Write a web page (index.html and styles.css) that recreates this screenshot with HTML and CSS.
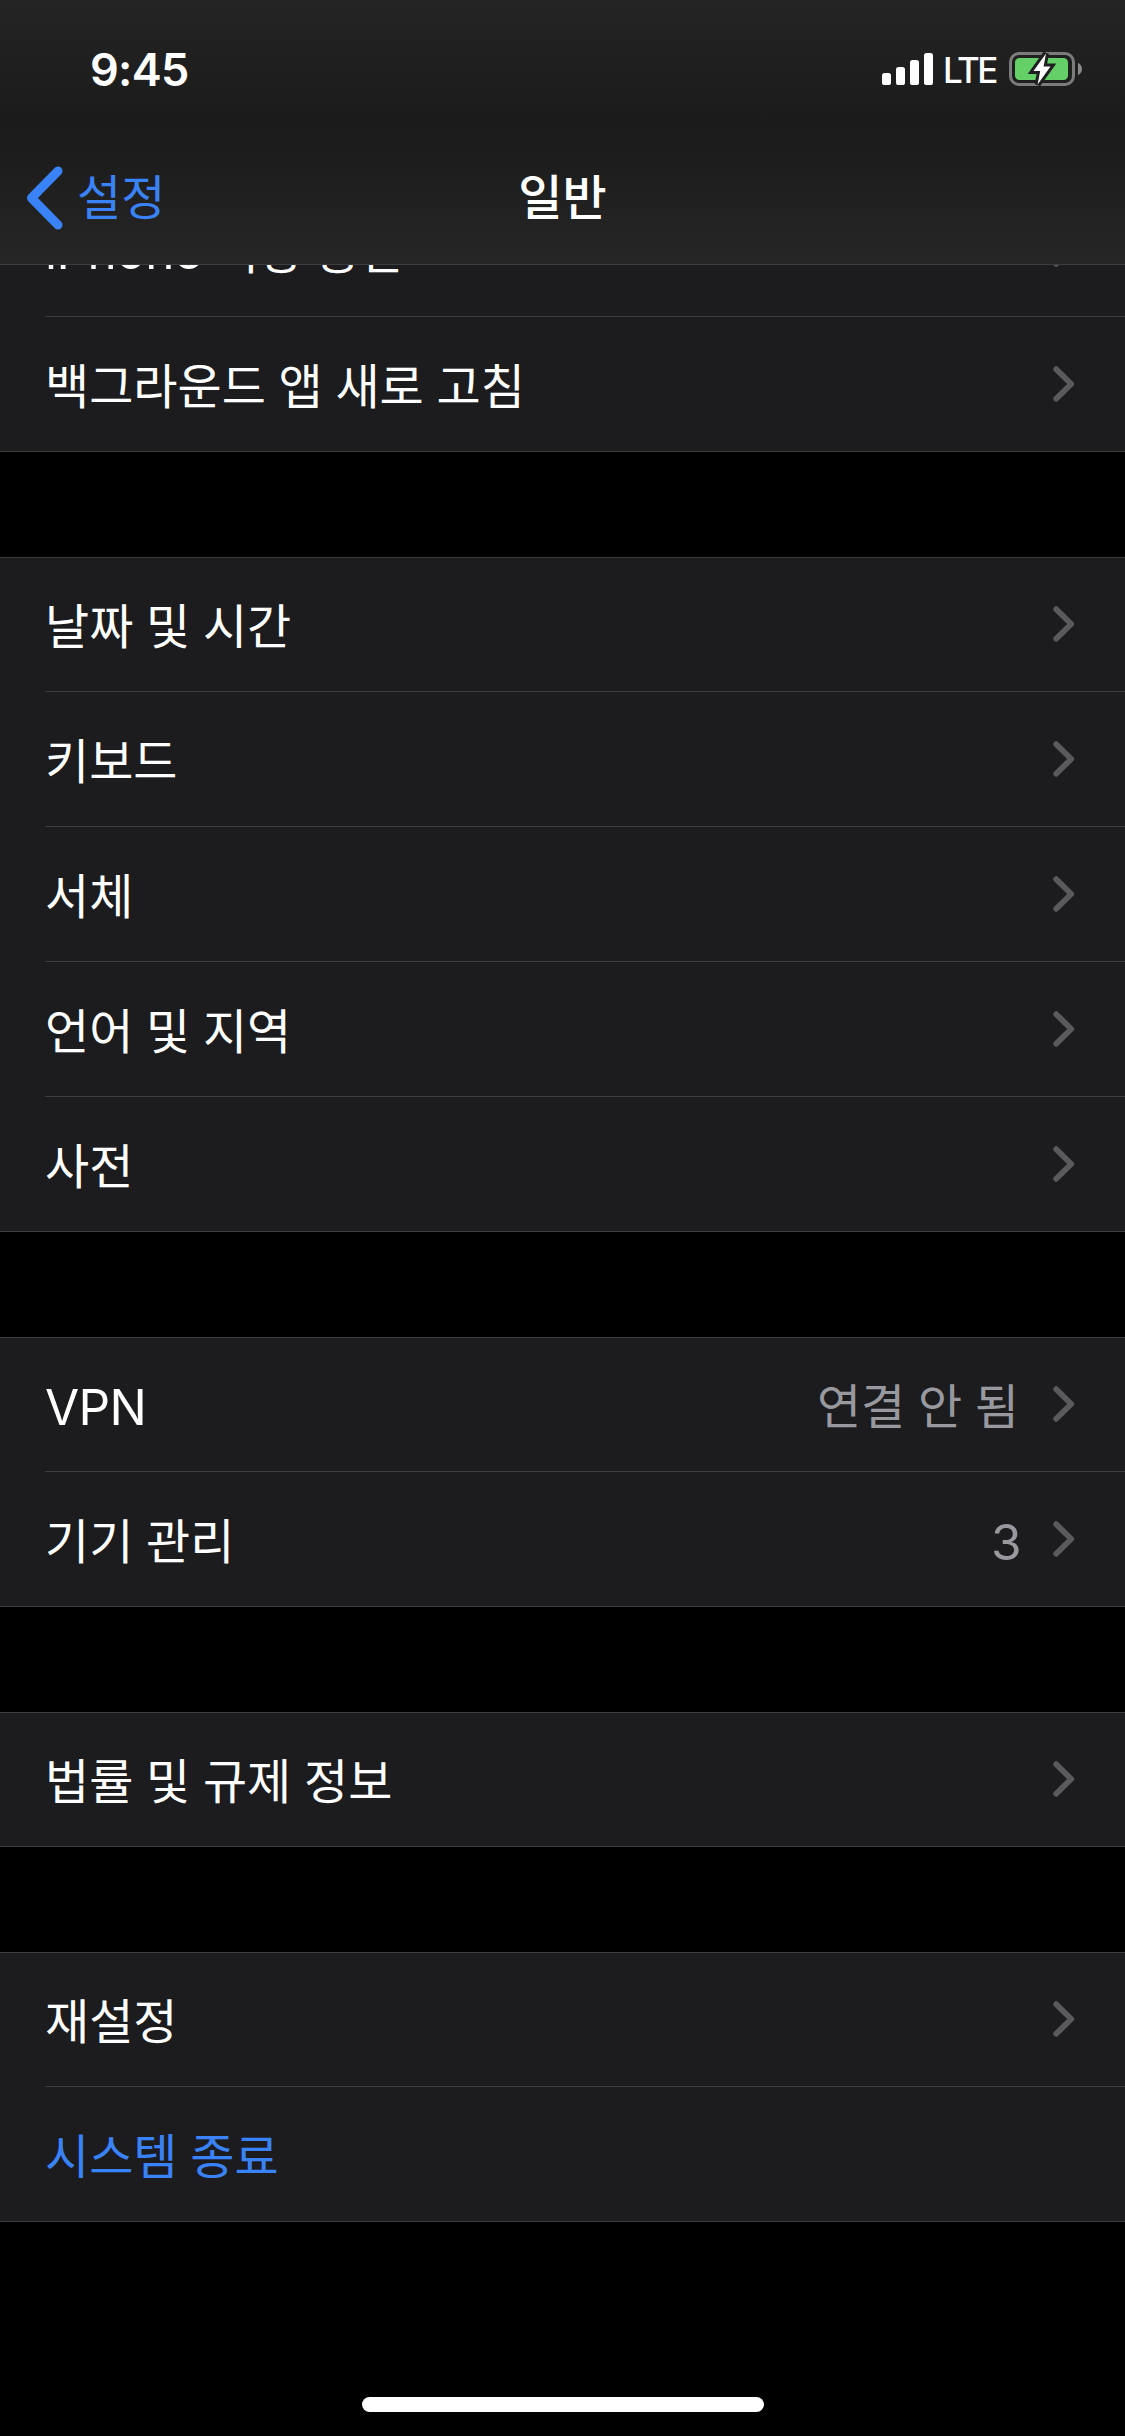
FILE: index.html
```html
<!DOCTYPE html>
<html lang="ko">
<head>
  <meta charset="UTF-8" />
  <meta name="viewport" content="width=device-width, initial-scale=1.0"/>
  <title>일반</title>
  <link rel="stylesheet" href="styles.css">
</head>
<body>

<svg class="sprite" aria-hidden="true">
  <symbol id="chevron" viewBox="0 0 22 36">
    <path d="M3.2 3.2 L18.2 18 L3.2 32.8" fill="none" stroke="currentColor" stroke-width="5.8" stroke-linecap="round" stroke-linejoin="round"/>
  </symbol>
</svg>

<header class="top">
  <div class="status-bar">
    <div class="time">9:45</div>
    <div class="status-icons">
      <svg class="signal" width="51" height="32" viewBox="0 0 51 32" fill="#fff">
        <rect x="0" y="20" width="9" height="12" rx="2.6"/>
        <rect x="14" y="14" width="9" height="18" rx="2.6"/>
        <rect x="28" y="7" width="9" height="25" rx="2.6"/>
        <rect x="42" y="0" width="9" height="32" rx="2.6"/>
      </svg>
      <span class="network">LTE</span>
      <svg class="battery" width="74" height="34" viewBox="0 0 74 34">
        <rect x="1.5" y="1.5" width="63" height="31" rx="8.5" fill="none" stroke="#7c7c7c" stroke-width="3"/>
        <path d="M69 10.7 Q73 13 73 17 Q73 21 69 23 Z" fill="#8a8a8a"/>
        <rect x="6" y="6" width="53" height="22" rx="4.5" fill="#65d068"/>
        <path d="M37 1.5 L24.5 19 H31.2 L28.6 32.5 L41.5 14.5 H34.6 Z" fill="#fff" stroke="#1f1f1f" stroke-width="6" paint-order="stroke"/>
      </svg>
    </div>
  </div>
  <nav class="nav-bar">
    <a class="back">
      <svg width="37" height="64" viewBox="0 0 37 64">
        <path d="M32 5 L5.5 32 L32 59" fill="none" stroke="currentColor" stroke-width="9" stroke-linecap="round" stroke-linejoin="round"/>
      </svg>
      <span class="back-text">설정</span>
    </a>
    <h1 class="title">일반</h1>
  </nav>
</header>

<main class="list">
  <section class="group">
    <div class="row"><span class="label"><span class="latin">iPhone</span> 저장 공간</span><svg class="chevron"><use href="#chevron"/></svg></div>
    <div class="row"><span class="label">백그라운드 앱 새로 고침</span><svg class="chevron"><use href="#chevron"/></svg></div>
  </section>

  <section class="group">
    <div class="row"><span class="label">날짜 및 시간</span><svg class="chevron"><use href="#chevron"/></svg></div>
    <div class="row"><span class="label">키보드</span><svg class="chevron"><use href="#chevron"/></svg></div>
    <div class="row"><span class="label">서체</span><svg class="chevron"><use href="#chevron"/></svg></div>
    <div class="row"><span class="label">언어 및 지역</span><svg class="chevron"><use href="#chevron"/></svg></div>
    <div class="row"><span class="label">사전</span><svg class="chevron"><use href="#chevron"/></svg></div>
  </section>

  <section class="group">
    <div class="row"><span class="label latin">VPN</span><span class="value">연결 안 됨</span><svg class="chevron"><use href="#chevron"/></svg></div>
    <div class="row"><span class="label">기기 관리</span><span class="value latin">3</span><svg class="chevron"><use href="#chevron"/></svg></div>
  </section>

  <section class="group">
    <div class="row"><span class="label">법률 및 규제 정보</span><svg class="chevron"><use href="#chevron"/></svg></div>
  </section>

  <section class="group">
    <div class="row"><span class="label">재설정</span><svg class="chevron"><use href="#chevron"/></svg></div>
    <div class="row"><span class="label link">시스템 종료</span></div>
  </section>
</main>

<div class="home-indicator"></div>

</body>
</html>
```
FILE: styles.css
```css
* { box-sizing: border-box; margin: 0; padding: 0; }

body {
  display: flex;
  flex-direction: column;
  width: 1125px;
  height: 2436px;
  background-color: #000;
  color: #fff;
  font-family: "Noto Sans CJK KR", sans-serif;
  font-size: 48px;
  overflow: hidden;
}

.sprite {
  position: absolute;
  width: 0;
  height: 0;
}

/* status bar + navigation */

.top {
  flex: none;
  height: 265px;
  background: linear-gradient(#242424 0, #1b1b1b 120px, #1d1d1d 160px, #262626 264px);
  border-bottom: 1px solid #3d3d40;
}

.status-bar {
  display: flex;
  justify-content: space-between;
  height: 132px;
  padding: 0 42px 0 90px;
}

.time {
  padding-top: 42px;
  font: 600 45px/56px Inter, sans-serif;
  letter-spacing: -0.7px;
}

.status-icons {
  display: flex;
  align-items: flex-start;
  padding-top: 52px;
}

.signal { margin-top: 1px; }

.network {
  width: 76px;
  padding-left: 10px;
  font: 500 35px/37px Inter, sans-serif;
  letter-spacing: -2.6px;
}

.nav-bar {
  display: grid;
  grid-template-columns: 1fr auto 1fr;
  align-items: center;
  height: 132px;
  padding: 0 26px;
}

.back {
  display: flex;
  align-items: center;
  gap: 14px;
  color: #3a82f7;
}

.back-text,
.title {
  padding-bottom: 8px;
}

.title {
  font-size: 48px;
  font-weight: 500;
}

/* settings list */

.list {
  flex: none;
  height: 1957px;
  overflow: hidden;
}

.group {
  margin-bottom: 105px;
  background-color: #1c1c1e;
  border-bottom: 1px solid #3d3d40;
  box-shadow: inset 0 1px #3d3d40;
}

/* scrolled under the navigation bar */
.group:first-child { margin-top: -83px; }

.row {
  display: flex;
  align-items: center;
  height: 135px;
  margin-left: 45px;
  padding-right: 50px;
  border-bottom: 1px solid #3d3d40;
}

.row:last-child {
  height: 134px;
  border-bottom: 0;
}

.label,
.value {
  padding-bottom: 3px;
  word-spacing: -0.7px;
}

.label { flex: 1; }

.latin {
  font-family: Inter, sans-serif;
  font-size: 49.5px;
  letter-spacing: -0.6px;
}

.label.latin,
.value.latin {
  padding-top: 6px;
  padding-bottom: 0;
}

.value {
  margin-right: 34px;
  color: #98989f;
}

.value.latin { margin-right: 32px; }

.link { color: #3a82f7; }

.chevron {
  width: 22px;
  height: 36px;
  color: #5a5a5e;
}

.home-indicator {
  width: 402px;
  height: 15px;
  margin: auto auto 24px;
  background-color: #fff;
  border-radius: 8px;
}
```
